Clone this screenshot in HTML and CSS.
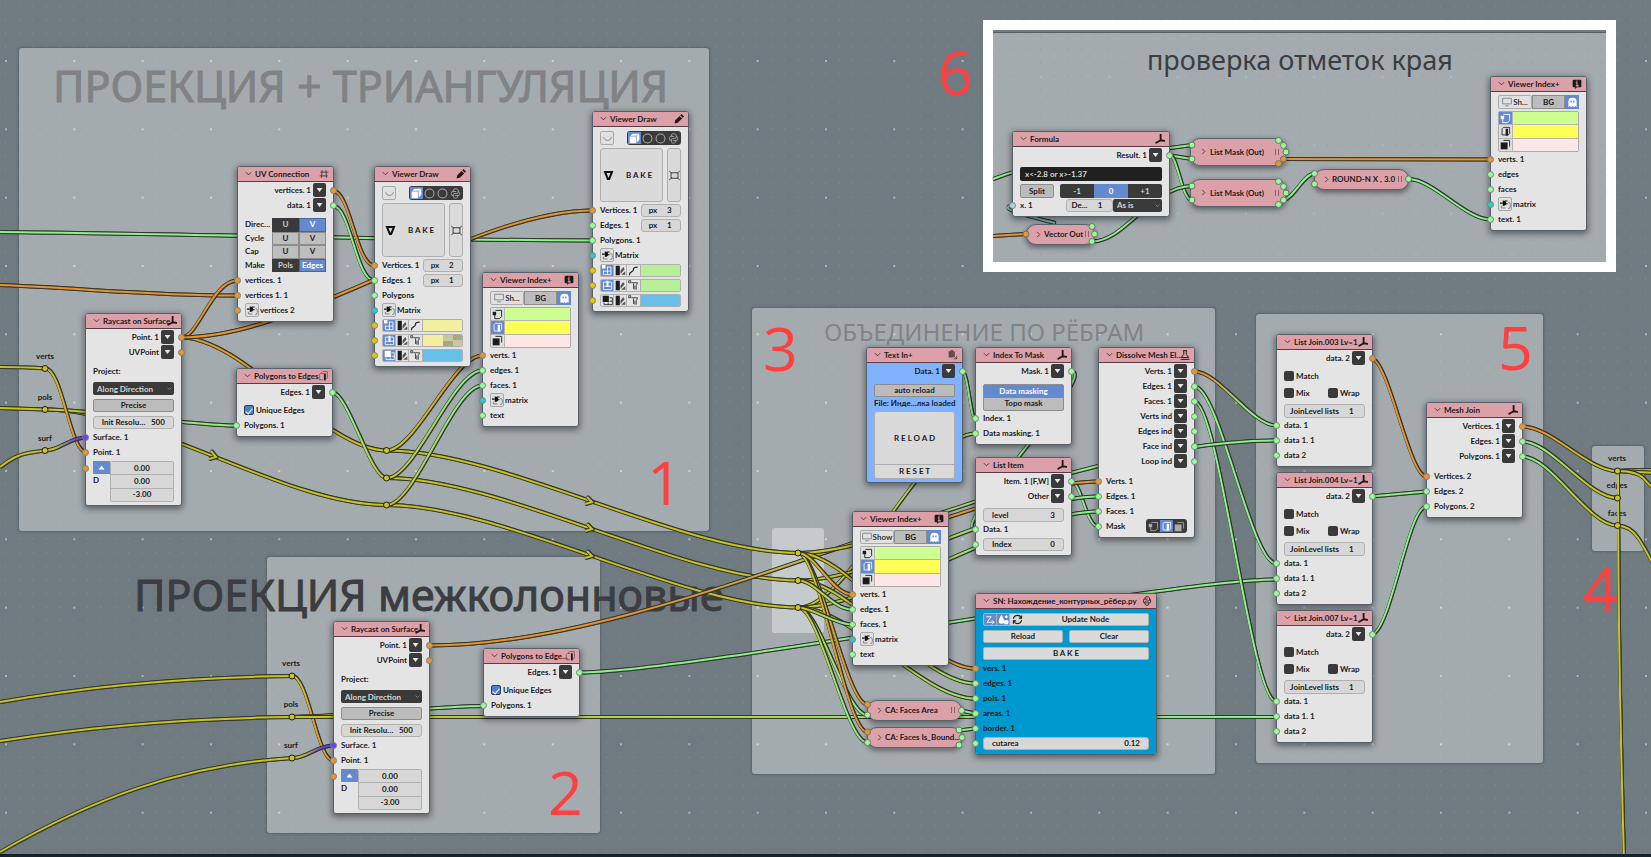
FILE: index.html
```html
<!DOCTYPE html>
<html lang="ru">
<head>
<meta charset="utf-8">
<title>Node editor</title>
<link rel="stylesheet" href="styles.css">
</head>
<body>
<svg class="defs" aria-hidden="true">
  <defs>
    <symbol id="chev" viewBox="0 0 16 16"><path d="M2 5l6 6 6-6" fill="none" stroke="currentColor" stroke-width="2"/></symbol>
    <symbol id="axis" viewBox="0 0 16 16"><path d="M9 1v9L2 14M9 10l6 1" fill="none" stroke="currentColor" stroke-width="3" stroke-linecap="round"/></symbol>
    <symbol id="hash" viewBox="0 0 16 16"><path d="M2 5h13M1 11h13M5 2L4 14M11 2l1 12" fill="none" stroke="#4a3a3e" stroke-width="1.500"/></symbol>
    <symbol id="pencil" viewBox="0 0 16 16"><path d="M1 15l1-5 7-7 4 4-7 7zM10 2l2-2 4 4-2 2z" fill="currentColor"/></symbol>
    <symbol id="info" viewBox="0 0 16 16"><path d="M3 1h10q2 0 2 2v8q0 2-2 2H8l-3 3v-3H3q-2 0-2-2V3q0-2 2-2z" fill="currentColor"/><path d="M8 2.500v2M6 6h2v5M6 11h5" fill="none" stroke="#dca1a8" stroke-width="1.700"/></symbol>
    <symbol id="bar" viewBox="0 0 16 16"><path d="M5 3l2-2h8v10l-2 2M8 14H2V6l2-2h5" fill="none" stroke="#6a4a50" stroke-width="1.200"/><path d="M11 4v11" stroke="currentColor" stroke-width="3"/></symbol>
    <symbol id="flask" viewBox="0 0 16 16"><path d="M5 1h6M6 1v6l-4 5h12l-4-5V1M1 15h14" fill="none" stroke="currentColor" stroke-width="1.500"/></symbol>
    <symbol id="paste" viewBox="0 0 16 16"><path d="M1 2h3V0h4v2h3v7L8 12H1z" fill="currentColor"/><path d="M9 9l5 5m0-5v5h-5" fill="none" stroke="currentColor" stroke-width="1.500"/></symbol>
    <symbol id="snake" viewBox="0 0 16 16"><path d="M9 5H3q-2 3 0 6h2V9q0-1 2-1h3q2 0 2-2V3q-1-2-4-2T5 3v2M7 11h6q2-3 0-6h-1M11 11v2q-1 2-3 2t-3-2v-2" fill="none" stroke="currentColor" stroke-width="1.300"/></symbol>
    <symbol id="screen" viewBox="0 0 16 16"><path d="M1 2h14v9H1zM5 14h6" fill="none" stroke="currentColor" stroke-width="1.500"/></symbol>
    <symbol id="ghost" viewBox="0 0 16 16"><path d="M2 15V6q0-5 6-5t6 5v9l-2-2-2 2-2-2-2 2-2-2z" fill="#fff"/><path d="M6 5v3M10 5v3" stroke="#5680c2" stroke-width="1.800"/></symbol>
    <symbol id="cube" viewBox="0 0 16 16"><path d="M1 5h9v10H1zM2 4l3-3h10l-4 3zM11 5l4-4v9l-4 4z" fill="#fff"/></symbol>
    <symbol id="ring" viewBox="0 0 16 16"><circle cx="8" cy="8" r="6.500" fill="none" stroke="currentColor" stroke-width="1.500"/></symbol>
    <symbol id="plug" viewBox="0 0 16 16"><path d="M0 6h4M7 3h4M7 7h4" stroke="#111" stroke-width="1.500"/><path d="M4 2q5 0 5 4t-5 4z" fill="#111"/><path d="M2 10v3h6M12 5q3 0 3 3v3q0 3-3 3" fill="none" stroke="#777" stroke-width="1.300"/></symbol>
    <symbol id="smile" viewBox="0 0 16 16"><path d="M2 6q2 5 6 5t6-5" fill="none" stroke="currentColor" stroke-width="1.400"/></symbol>
    <symbol id="tri" viewBox="0 0 16 16"><path d="M3 3h10L9 13H7z" fill="none" stroke="#111" stroke-width="3"/></symbol>
    <symbol id="target" viewBox="0 0 16 16"><path d="M3 4h10v8H3zM0 1l4 4M16 1l-4 4M0 15l4-4M16 15l-4-4" fill="none" stroke="#333" stroke-width="1.300"/></symbol>
    <symbol id="mv" viewBox="0 0 16 16"><path d="M5 2h9v9l-3 3H4V8" fill="none" stroke="currentColor" stroke-width="1.300"/><path d="M1 4h5v5H1z" fill="currentColor"/></symbol>
    <symbol id="me" viewBox="0 0 16 16"><path d="M3 13V4l2-2h9v9l-2 2H3" fill="none" stroke="currentColor" stroke-width="1.200"/><path d="M10 4v10" stroke="currentColor" stroke-width="3.500"/></symbol>
    <symbol id="mf" viewBox="0 0 16 16"><path d="M5 2h9v9" fill="none" stroke="currentColor" stroke-width="1.300"/><path d="M1 5h10v10H1z" fill="currentColor"/></symbol>
    <symbol id="gv" viewBox="0 0 16 16"><path d="M2 8v6h11V3H7M8 3v11M2 9h11" fill="none" stroke="currentColor" stroke-width="1.200"/><path d="M0 0h5v5H0z" fill="currentColor"/></symbol>
    <symbol id="ge" viewBox="0 0 16 16"><path d="M2 3h12v11H2zM2 9h12" fill="none" stroke="currentColor" stroke-width="1.200"/><path d="M8 1v9" stroke="currentColor" stroke-width="3"/></symbol>
    <symbol id="gf" viewBox="0 0 16 16"><path d="M11 4h4v10H3v-3M9 11v3M11 9h4" fill="none" stroke="currentColor" stroke-width="1.200"/><path d="M1 1h9v9H1z" fill="currentColor"/></symbol>
    <symbol id="pal" viewBox="0 0 16 16"><path d="M1 1h6v14H1z" fill="#1c1c1c"/><path d="M8 8l4-5 2 3-6 7zM9 14h6v-5z" fill="#555"/></symbol>
    <symbol id="curve" viewBox="0 0 16 16"><path d="M2 15q0-4 3-5t3-4 6-3" fill="none" stroke="#222" stroke-width="1.800"/></symbol>
    <symbol id="brush" viewBox="0 0 16 16"><path d="M1 1h3v3H1zM5 4h9l-2 4v6M8 5v8M10 8v6" fill="none" stroke="#444" stroke-width="1.400"/></symbol>
    <symbol id="flow" viewBox="0 0 16 16"><path d="M2 4h7l-6 8h10M10 9l3 3-3 3" fill="none" stroke="currentColor" stroke-width="1.300"/></symbol>
    <symbol id="drop" viewBox="0 0 16 16"><path d="M5 1q8 13 0 13T5 1zM9 9h6v6H9z" fill="currentColor"/><circle cx="12" cy="4" r="2" fill="currentColor"/></symbol>
    <symbol id="cycle" viewBox="0 0 16 16"><path d="M2 7q1-5 6-5 4 0 5 3M14 2v4h-4M14 9q-1 5-6 5-4 0-5-3M2 14v-4h4" fill="none" stroke="currentColor" stroke-width="1.500"/></symbol>
    <g id="dots">
      <path d="M0 0h1v1h-1zM13.670 0h1v1h-1zM27.330 0h1v1h-1zM41 0h1v1h-1zM54.670 0h1v1h-1z"/>
    </g>
    <pattern id="grid" x="5" y="60" width="68.333" height="68.333" patternUnits="userSpaceOnUse">
      <g fill="#8a959c"><use href="#dots"/><use href="#dots" y="13.670"/><use href="#dots" y="27.330"/><use href="#dots" y="41"/><use href="#dots" y="54.670"/></g>
      <path d="M0 0h2v2h-2z" fill="#a6bac9"/>
    </pattern>
    <pattern id="grid-inset" x="47" y="46" width="68.333" height="68.333" patternUnits="userSpaceOnUse">
      <g fill="#8a959c"><use href="#dots"/><use href="#dots" y="13.670"/><use href="#dots" y="27.330"/><use href="#dots" y="41"/><use href="#dots" y="54.670"/></g>
      <path d="M0 0h2v2h-2z" fill="#a6bac9"/>
    </pattern>
    <linearGradient id="yo1" gradientUnits="userSpaceOnUse" x1="400" x2="470"><stop stop-color="#c8c41e"/><stop offset="1" stop-color="#e6942b"/></linearGradient>
    <linearGradient id="yg1" gradientUnits="userSpaceOnUse" x1="390" x2="460"><stop stop-color="#c8c41e"/><stop offset="1" stop-color="#8cf08c"/></linearGradient>
    <linearGradient id="oy1" gradientUnits="userSpaceOnUse" x1="181" x2="386"><stop stop-color="#e6942b"/><stop offset="1" stop-color="#c8c41e"/></linearGradient>
    <linearGradient id="gy1" gradientUnits="userSpaceOnUse" x1="350" x2="386"><stop stop-color="#8cf08c"/><stop offset="1" stop-color="#c8c41e"/></linearGradient>
    <linearGradient id="yo0" gradientUnits="userSpaceOnUse" x1="50" x2="76"><stop stop-color="#c8c41e"/><stop offset="1" stop-color="#e6942b"/></linearGradient>
    <linearGradient id="yg0" gradientUnits="userSpaceOnUse" x1="45" x2="236"><stop stop-color="#c8c41e"/><stop offset="1" stop-color="#8cf08c"/></linearGradient>
    <linearGradient id="yp0" gradientUnits="userSpaceOnUse" x1="54" x2="76"><stop stop-color="#c8c41e"/><stop offset="1" stop-color="#6a3cf0"/></linearGradient>
    <linearGradient id="yo2" gradientUnits="userSpaceOnUse" x1="297" x2="323"><stop stop-color="#c8c41e"/><stop offset="1" stop-color="#e6942b"/></linearGradient>
    <linearGradient id="yp2" gradientUnits="userSpaceOnUse" x1="301" x2="323"><stop stop-color="#c8c41e"/><stop offset="1" stop-color="#6a3cf0"/></linearGradient>
    <linearGradient id="yg2s" gradientUnits="userSpaceOnUse" x1="330" x2="450"><stop stop-color="#c8c41e"/><stop offset="1" stop-color="#8cf08c"/></linearGradient>
    <linearGradient id="yg2" gradientUnits="userSpaceOnUse" x1="292" x2="1276"><stop stop-color="#c8c41e"/><stop offset="1" stop-color="#7cf58c"/></linearGradient>
    <linearGradient id="og2" gradientUnits="userSpaceOnUse" x1="650" x2="1050"><stop stop-color="#e6942b"/><stop offset="1" stop-color="#8cf08c"/></linearGradient>
    <linearGradient id="yo3" gradientUnits="userSpaceOnUse" x1="805" x2="845"><stop stop-color="#c8c41e"/><stop offset="1" stop-color="#e6942b"/></linearGradient>
    <linearGradient id="yg3" gradientUnits="userSpaceOnUse" x1="805" x2="845"><stop stop-color="#c8c41e"/><stop offset="1" stop-color="#8cf08c"/></linearGradient>
    <linearGradient id="yo4" gradientUnits="userSpaceOnUse" x1="820" x2="975"><stop stop-color="#c8c41e"/><stop offset="1" stop-color="#e6942b"/></linearGradient>
    <linearGradient id="yg4" gradientUnits="userSpaceOnUse" x1="820" x2="1040"><stop stop-color="#c8c41e"/><stop offset="1" stop-color="#8cf08c"/></linearGradient>
    <linearGradient id="og5" gradientUnits="userSpaceOnUse" x1="1205" x2="1250"><stop stop-color="#e6942b"/><stop offset="1" stop-color="#8cf08c"/></linearGradient>
    <linearGradient id="oy5" gradientUnits="userSpaceOnUse" x1="1535" x2="1590"><stop stop-color="#e6942b"/><stop offset="1" stop-color="#c8c41e"/></linearGradient>
    <linearGradient id="gy5" gradientUnits="userSpaceOnUse" x1="1535" x2="1590"><stop stop-color="#8cf08c"/><stop offset="1" stop-color="#c8c41e"/></linearGradient>
  </defs>
</svg>

<main class="canvas">
  <svg class="layer"><rect width="100%" height="100%" fill="url(#grid)"/></svg>

  <section class="frame f1"></section>
  <section class="frame f2"></section>
  <section class="frame f3"></section>
  <section class="frame f3a"></section>
  <section class="frame f4"></section>
  <section class="frame f5"></section>
  <section class="inset"><svg class="layer"><rect width="100%" height="100%" fill="url(#grid-inset)"/></svg><div class="inset-frame"></div></section>

  <h2 class="title t1">ПРОЕКЦИЯ + ТРИАНГУЛЯЦИЯ</h2>
  <h2 class="title t2">ПРОЕКЦИЯ межколонновые</h2>
  <h2 class="title t3">ОБЪЕДИНЕНИЕ ПО РЁБРАМ</h2>
  <h2 class="title t6">проверка отметок края</h2>
  <span class="tag l1">verts</span><span class="tag l2">pols</span><span class="tag l3">surf</span>
  <span class="tag l4">verts</span><span class="tag l5">pols</span><span class="tag l6">surf</span>
  <span class="tag l7">verts</span><span class="tag l8">edges</span><span class="tag l9">faces</span>

  <svg class="layer wires">
    <g stroke="#c8c41e">
      <path d="M0 367Q25 367 45 368.500"/><path d="M0 408L45 409.500"/><path d="M0 467Q15 455 28 453T45 450.500"/>
      <path d="M45 409.500C147 409.500 284 505 386.500 505"/>
      <path d="M386.500 450.500C502 450.500 683 553 798 553"/><path d="M386.500 478C502 478 683 580.500 798 580.500"/><path d="M386.500 505C502 505 683 607.500 798 607.500"/>
      <path d="M0 702C100 684 200 677 292 676"/><path d="M0 741C100 725 200 718 292 717"/><path d="M0 852C90 800 180 765 292 758"/>
      <path d="M211 451L216 457L209 459"/><path d="M587 497L592 502L585 504"/><path d="M587 524L592 529L585 531"/><path d="M587 551L592 556L585 558"/>
      <path d="M1617 471Q1636 470 1660 470"/><path d="M1617 471L1660 473"/><path d="M1617 471Q1638 471 1645 480T1660 490"/>
      <path d="M1617 525.500Q1630 526 1638 538T1656 570"/>
      <path d="M1618 471Q1618 660 1624 860"/>
    </g>
    <path d="M45 409.500C90 409.500 190 425.500 236 425.500" stroke="url(#yg0)"/>
    <path d="M45 368.500C62 368.500 70 452.500 86 452.500" stroke="url(#yo0)"/>
    <path d="M45 450.500C60 450.500 68 437.500 86 437.500" stroke="url(#yp0)"/>
    <path d="M292 676C308 676 317 760.500 333 760.500" stroke="url(#yo2)"/>
    <path d="M292 758C307 758 316 745.500 333 745.500" stroke="url(#yp2)"/>
    <path d="M292 717C330 717 440 706 484 706" stroke="url(#yg2s)"/>
    <path d="M292 717L1276 717" stroke="url(#yg2)"/>
    <g stroke="#8cf08c">
      <path d="M0 232C200 234 400 240 593 240.500"/>
      <path d="M333 206C350 206 356 280.500 374 280.500"/>
      <path d="M579 672.500C684 672.500 1171 579.500 1276 579.500"/>
      <path d="M1071 371.500C1100 371.500 947 529.500 975 529.500"/>
      <path d="M962 371.500C968 371.500 970 418.500 975 418.500"/>
      <path d="M1071 481.500C1081 481.500 1086 526.500 1098 526.500"/>
      <path d="M961 710.500L975 713.500"/><path d="M959 730.500L975 728.500"/>
      <path d="M1194 386.500C1219 386.500 1251 563.500 1276 563.500"/>
      <path d="M1194 401.500C1219 401.500 1251 701.500 1276 701.500"/>
      <path d="M1371 496.500L1426 491.500"/><path d="M1371 634.500C1390 634.500 1408 506.500 1426 506.500"/>
      <path d="M993 179Q1010 172 1030 168T1192 145"/>
      <path d="M1170 155.500L1192 159"/><path d="M1170 155.500C1177 155.500 1182 200.500 1192 200.500"/>
      <path d="M1092 241.500C1125 241.500 1150 187 1192 186"/>
      <path d="M1283 200C1292 200 1304 173.500 1314 173.500"/>
      <path d="M1408 179C1433 179 1465 219.500 1490 219.500"/>
    </g>
    <path d="M386.500 478C415 478 453 370.500 482 370.500" stroke="url(#yg1)"/>
    <path d="M386.500 505C415 505 453 385.500 482 385.500" stroke="url(#yg1)"/>
    <path d="M386.500 450.500C415 450.500 453 355.500 482 355.500" stroke="url(#yo1)"/>
    <path d="M181 337.500C243 337.500 325 450.500 386.500 450.500" stroke="url(#oy1)"/>
    <path d="M332 392.500C348 392.500 370 478 386.500 478" stroke="url(#gy1)"/>
    <path d="M429 645.500C682 645.500 1023 440.500 1276 440.500" stroke="url(#og2)"/>
    <path d="M798 607.500C851 607.500 922 433.500 975 433.500" stroke="url(#yg4)"/>
    <path d="M798 553C878 553 1018 481.500 1098 481.500" stroke="url(#yo4)"/>
    <path d="M798 580.500C878 580.500 1018 496.500 1098 496.500" stroke="url(#yg4)"/>
    <path d="M798 607.500C878 607.500 1018 511.500 1098 511.500" stroke="url(#yg4)"/>
    <path d="M798 580.500C851 580.500 922 683.500 975 683.500" stroke="url(#yg4)"/>
    <path d="M798 607.500C851 607.500 922 698.500 975 698.500" stroke="url(#yg4)"/>
    <path d="M798 553C851 553 922 668.500 975 668.500" stroke="url(#yo4)"/>
    <path d="M798 607.500C819 607.500 846 715 867 715" stroke="url(#yg3)"/>
    <path d="M798 607.500C819 607.500 846 742.500 867 742.500" stroke="url(#yg3)"/>
    <path d="M798 553C819 553 846 704.500 867 704.500" stroke="url(#yo3)"/>
    <path d="M798 553C819 553 846 732 867 732" stroke="url(#yo3)"/>
    <path d="M798 580.500C815 580.500 832 609.500 852 609.500" stroke="url(#yg3)"/>
    <path d="M798 607.500C812 607.500 835 624.500 852 624.500" stroke="url(#yg3)"/>
    <path d="M798 553C815 553 832 594.500 852 594.500" stroke="url(#yo3)"/>
    <g stroke="#e6942b">
      <path d="M0 285C80 288 150 295.500 237 295.500"/>
      <path d="M181 337.500C198 337.500 212 280.500 237 280.500"/>
      <path d="M181 337.500C304 337.500 470 210.500 593 210.500"/>
      <path d="M333 191C350 191 356 265.500 374 265.500"/>
      <path d="M1371 358.500C1388 358.500 1409 476.500 1426 476.500"/>
      <path d="M993 236L1026 234"/>
      <path d="M1283 159L1490 159.500"/>
    </g>
    <path d="M1194 371.500C1219 371.500 1251 425.500 1276 425.500" stroke="url(#og5)"/>
    <path d="M1522 426.500C1551 426.500 1588 471 1617 471" stroke="url(#oy5)"/>
    <path d="M1522 441.500C1551 441.500 1588 498 1617 498" stroke="url(#gy5)"/>
    <path d="M1522 456.500C1551 456.500 1588 525.500 1617 525.500" stroke="url(#gy5)"/>
    <path d="M1012 205.500C1000 208 1012 212 1055 223" stroke="#7fb5b0"/>
  </svg>

  <article class="node n-uv">
    <header><svg class="ch"><use href="#chev"/></svg><h3>UV Connection</h3><svg class="ic"><use href="#hash"/></svg></header>
    <div class="body">
      <div class="out">vertices. 1<button class="dd" aria-label="menu"></button><i class="s o r"></i></div>
      <div class="out">data. 1<button class="dd" aria-label="menu"></button><i class="s g r"></i></div>
      <div class="uv m5">
        <span>Direc…</span><button class="dk">U</button><button class="bl">V</button>
        <span>Cycle</span><button>U</button><button>V</button>
        <span>Cap</span><button>U</button><button>V</button>
        <span>Make</span><button class="dk">Pols</button><button class="bl">Edges</button>
      </div>
      <div class="in m1"><i class="s o"></i>vertices. 1</div>
      <div class="in"><i class="s o"></i>vertices 1. 1</div>
      <div class="in"><i class="s o"></i><button class="sq" aria-label="plug"><svg><use href="#plug"/></svg></button>vertices 2</div>
    </div>
  </article>

  <article class="node n-vda">
    <header><svg class="ch"><use href="#chev"/></svg><h3>Viewer Draw</h3><svg class="ic"><use href="#pencil"/></svg></header>
    <div class="body">
      <div class="tools m3"><button class="sq" aria-label="show"><svg><use href="#smile"/></svg></button><div class="seg"><button class="bl" aria-label="solid"><svg><use href="#cube"/></svg></button><button aria-label="ring"><svg><use href="#ring"/></svg></button><button aria-label="ring"><svg><use href="#ring"/></svg></button><button aria-label="script"><svg><use href="#snake"/></svg></button></div></div>
      <div class="bake m3"><button class="b1"><svg><use href="#tri"/></svg>B A K E</button><button class="b2" aria-label="target"><svg><use href="#target"/></svg></button></div>
      <div class="in m1"><i class="s o"></i>Vertices. 1<label class="num px">px<input value="2"></label></div>
      <div class="in"><i class="s g"></i>Edges. 1<label class="num px">px<input value="1"></label></div>
      <div class="in"><i class="s g"></i>Polygons</div>
      <div class="in"><i class="s c"></i><button class="sq" aria-label="plug"><svg><use href="#plug"/></svg></button>Matrix</div>
      <div class="in"><i class="s y"></i><div class="col"><button class="bl" aria-label="v"><svg><use href="#gv"/></svg></button><button aria-label="p"><svg><use href="#pal"/></svg></button><button aria-label="c"><svg><use href="#curve"/></svg></button><button class="sw ylw" aria-label="color"></button></div></div>
      <div class="in"><i class="s y"></i><div class="col"><button class="bl" aria-label="e"><svg><use href="#ge"/></svg></button><button aria-label="p"><svg><use href="#pal"/></svg></button><button aria-label="c"><svg><use href="#brush"/></svg></button><button class="sw chk" aria-label="color"></button></div></div>
      <div class="in"><i class="s y"></i><div class="col"><button class="bl" aria-label="f"><svg><use href="#gf"/></svg></button><button aria-label="p"><svg><use href="#pal"/></svg></button><button aria-label="c"><svg><use href="#brush"/></svg></button><button class="sw sky" aria-label="color"></button></div></div>
    </div>
  </article>

  <article class="node n-vdb">
    <header><svg class="ch"><use href="#chev"/></svg><h3>Viewer Draw</h3><svg class="ic"><use href="#pencil"/></svg></header>
    <div class="body">
      <div class="tools m3"><button class="sq" aria-label="show"><svg><use href="#smile"/></svg></button><div class="seg"><button class="bl" aria-label="solid"><svg><use href="#cube"/></svg></button><button aria-label="ring"><svg><use href="#ring"/></svg></button><button aria-label="ring"><svg><use href="#ring"/></svg></button><button aria-label="script"><svg><use href="#snake"/></svg></button></div></div>
      <div class="bake m3"><button class="b1"><svg><use href="#tri"/></svg>B A K E</button><button class="b2" aria-label="target"><svg><use href="#target"/></svg></button></div>
      <div class="in m1"><i class="s o"></i>Vertices. 1<label class="num px">px<input value="3"></label></div>
      <div class="in"><i class="s g"></i>Edges. 1<label class="num px">px<input value="1"></label></div>
      <div class="in"><i class="s g"></i>Polygons. 1</div>
      <div class="in"><i class="s c"></i><button class="sq" aria-label="plug"><svg><use href="#plug"/></svg></button>Matrix</div>
      <div class="in"><i class="s y"></i><div class="col"><button class="bl" aria-label="v"><svg><use href="#gv"/></svg></button><button aria-label="p"><svg><use href="#pal"/></svg></button><button aria-label="c"><svg><use href="#curve"/></svg></button><button class="sw lime" aria-label="color"></button></div></div>
      <div class="in"><i class="s y"></i><div class="col"><button class="bl" aria-label="e"><svg><use href="#ge"/></svg></button><button aria-label="p"><svg><use href="#pal"/></svg></button><button aria-label="c"><svg><use href="#brush"/></svg></button><button class="sw lime" aria-label="color"></button></div></div>
      <div class="in"><i class="s y"></i><div class="col"><button aria-label="f"><svg><use href="#gf"/></svg></button><button aria-label="p"><svg><use href="#pal"/></svg></button><button aria-label="c"><svg><use href="#brush"/></svg></button><button class="sw sky" aria-label="color"></button></div></div>
    </div>
  </article>

  <article class="node n-via">
    <header><svg class="ch"><use href="#chev"/></svg><h3>Viewer Index+</h3><svg class="ic"><use href="#info"/></svg></header>
    <div class="body">
      <div class="show m2"><button class="sh"><svg><use href="#screen"/></svg>Sh...</button><button class="bg">BG</button><button class="bl gh" aria-label="ghost"><svg><use href="#ghost"/></svg></button></div>
      <div class="pal m2"><button aria-label="v"><svg><use href="#mv"/></svg></button><button class="c1" aria-label="color"></button><button class="bl" aria-label="e"><svg><use href="#me"/></svg></button><button class="c2" aria-label="color"></button><button aria-label="f"><svg><use href="#mf"/></svg></button><button class="c3" aria-label="color"></button></div>
      <div class="in"><i class="s o"></i>verts. 1</div>
      <div class="in"><i class="s g"></i>edges. 1</div>
      <div class="in"><i class="s g"></i>faces. 1</div>
      <div class="in"><i class="s c"></i><button class="sq" aria-label="plug"><svg><use href="#plug"/></svg></button>matrix</div>
      <div class="in"><i class="s g"></i>text</div>
    </div>
  </article>

  <article class="node n-vib">
    <header><svg class="ch"><use href="#chev"/></svg><h3>Viewer Index+</h3><svg class="ic"><use href="#info"/></svg></header>
    <div class="body">
      <div class="show m2"><button class="sh"><svg><use href="#screen"/></svg>Show</button><button class="bg">BG</button><button class="bl gh" aria-label="ghost"><svg><use href="#ghost"/></svg></button></div>
      <div class="pal m2"><button aria-label="v"><svg><use href="#mv"/></svg></button><button class="c1" aria-label="color"></button><button class="bl" aria-label="e"><svg><use href="#me"/></svg></button><button class="c2" aria-label="color"></button><button aria-label="f"><svg><use href="#mf"/></svg></button><button class="c3" aria-label="color"></button></div>
      <div class="in"><i class="s o"></i>verts. 1</div>
      <div class="in"><i class="s g"></i>edges. 1</div>
      <div class="in"><i class="s g"></i>faces. 1</div>
      <div class="in"><i class="s c"></i><button class="sq" aria-label="plug"><svg><use href="#plug"/></svg></button>matrix</div>
      <div class="in"><i class="s g"></i>text</div>
    </div>
  </article>

  <article class="node n-vic">
    <header><svg class="ch"><use href="#chev"/></svg><h3>Viewer Index+</h3><svg class="ic"><use href="#info"/></svg></header>
    <div class="body">
      <div class="show m2"><button class="sh"><svg><use href="#screen"/></svg>Sh...</button><button class="bg">BG</button><button class="bl gh" aria-label="ghost"><svg><use href="#ghost"/></svg></button></div>
      <div class="pal m2"><button class="bl" aria-label="v"><svg><use href="#mv"/></svg></button><button class="c1" aria-label="color"></button><button aria-label="e"><svg><use href="#me"/></svg></button><button class="c2" aria-label="color"></button><button aria-label="f"><svg><use href="#mf"/></svg></button><button class="c3" aria-label="color"></button></div>
      <div class="in"><i class="s o"></i>verts. 1</div>
      <div class="in"><i class="s g"></i>edges</div>
      <div class="in"><i class="s g"></i>faces</div>
      <div class="in"><i class="s c"></i><button class="sq" aria-label="plug"><svg><use href="#plug"/></svg></button>matrix</div>
      <div class="in"><i class="s g"></i>text. 1</div>
    </div>
  </article>

  <article class="node n-rca">
    <header><svg class="ch"><use href="#chev"/></svg><h3>Raycast on Surface</h3><svg class="ic"><use href="#axis"/></svg></header>
    <div class="body">
      <div class="out">Point. 1<button class="dd" aria-label="menu"></button><i class="s o r"></i></div>
      <div class="out">UVPoint<button class="dd" aria-label="menu"></button><i class="s o r"></i></div>
      <div class="in m4">Project:</div>
      <div class="drop m3"><select aria-label="Project"><option>Along Direction</option></select><svg><use href="#chev"/></svg></div>
      <button class="btn mid m4">Precise</button>
      <label class="num m4">Init Resolu…<input value="500"></label>
      <div class="in m1"><i class="s p"></i>Surface. 1</div>
      <div class="in"><i class="s o"></i>Point. 1</div>
      <div class="vec m1"><i class="s o"></i><div><button class="up" aria-label="up"></button><span>D</span></div><div class="xyz"><input aria-label="X" value="0.00"><input aria-label="Y" value="0.00"><input aria-label="Z" value="-3.00"></div></div>
    </div>
  </article>

  <article class="node n-rcb">
    <header><svg class="ch"><use href="#chev"/></svg><h3>Raycast on Surface</h3><svg class="ic"><use href="#axis"/></svg></header>
    <div class="body">
      <div class="out">Point. 1<button class="dd" aria-label="menu"></button><i class="s o r"></i></div>
      <div class="out">UVPoint<button class="dd" aria-label="menu"></button><i class="s o r"></i></div>
      <div class="in m4">Project:</div>
      <div class="drop m3"><select aria-label="Project"><option>Along Direction</option></select><svg><use href="#chev"/></svg></div>
      <button class="btn mid m4">Precise</button>
      <label class="num m4">Init Resolu…<input value="500"></label>
      <div class="in m1"><i class="s p"></i>Surface. 1</div>
      <div class="in"><i class="s o"></i>Point. 1</div>
      <div class="vec m1"><i class="s o"></i><div><button class="up" aria-label="up"></button><span>D</span></div><div class="xyz"><input aria-label="X" value="0.00"><input aria-label="Y" value="0.00"><input aria-label="Z" value="-3.00"></div></div>
    </div>
  </article>

  <article class="node n-pea">
    <header><svg class="ch"><use href="#chev"/></svg><h3>Polygons to Edges</h3><svg class="ic"><use href="#bar"/></svg></header>
    <div class="body">
      <div class="out">Edges. 1<button class="dd" aria-label="menu"></button><i class="s g r"></i></div>
      <div class="in m3"><label class="check"><input type="checkbox" checked>Unique Edges</label></div>
      <div class="in"><i class="s g"></i>Polygons. 1</div>
    </div>
  </article>

  <article class="node n-peb">
    <header><svg class="ch"><use href="#chev"/></svg><h3>Polygons to Edge...</h3><svg class="ic"><use href="#bar"/></svg></header>
    <div class="body">
      <div class="out">Edges. 1<button class="dd" aria-label="menu"></button><i class="s g r"></i></div>
      <div class="in m3"><label class="check"><input type="checkbox" checked>Unique Edges</label></div>
      <div class="in"><i class="s g"></i>Polygons. 1</div>
    </div>
  </article>

  <article class="node n-txt">
    <header><svg class="ch"><use href="#chev"/></svg><h3>Text In+</h3><svg class="ic dim"><use href="#paste"/></svg></header>
    <div class="body">
      <div class="out">Data. 1<button class="dd" aria-label="menu"></button><i class="s g r"></i></div>
      <button class="btn mid m5">auto reload</button>
      <div class="file">File: Инде...лка loaded</div>
      <div class="stack"><button class="tall">R E L O A D</button><button>R E S E T</button></div>
    </div>
  </article>

  <article class="node n-itm">
    <header><svg class="ch"><use href="#chev"/></svg><h3>Index To Mask</h3><svg class="ic"><use href="#axis"/></svg></header>
    <div class="body">
      <div class="out">Mask. 1<button class="dd" aria-label="menu"></button><i class="s g r"></i></div>
      <div class="two m5"><button class="bl">Data masking</button><button>Topo mask</button></div>
      <div class="in"><i class="s g"></i>Index. 1</div>
      <div class="in"><i class="s g"></i>Data masking. 1</div>
    </div>
  </article>

  <article class="node n-li">
    <header><svg class="ch"><use href="#chev"/></svg><h3>List Item</h3><svg class="ic"><use href="#axis"/></svg></header>
    <div class="body">
      <div class="out">Item. 1 [F,W]<button class="dd" aria-label="menu"></button><i class="s g r"></i></div>
      <div class="out">Other<button class="dd" aria-label="menu"></button><i class="s g r"></i></div>
      <label class="num wide h14 m4">level<input value="3"></label>
      <div class="in"><i class="s g"></i>Data. 1</div>
      <div class="in"><i class="s g"></i><label class="num wide full">Index<input value="0"></label></div>
    </div>
  </article>

  <article class="node n-dis">
    <header><svg class="ch"><use href="#chev"/></svg><h3>Dissolve Mesh El...</h3><svg class="ic"><use href="#flask"/></svg></header>
    <div class="body">
      <div class="out">Verts. 1<button class="dd" aria-label="menu"></button><i class="s o r"></i></div>
      <div class="out">Edges. 1<button class="dd" aria-label="menu"></button><i class="s g r"></i></div>
      <div class="out">Faces. 1<button class="dd" aria-label="menu"></button><i class="s g r"></i></div>
      <div class="out">Verts ind<button class="dd" aria-label="menu"></button><i class="s g r"></i></div>
      <div class="out">Edges ind<button class="dd" aria-label="menu"></button><i class="s g r"></i></div>
      <div class="out">Face ind<button class="dd" aria-label="menu"></button><i class="s g r"></i></div>
      <div class="out">Loop ind<button class="dd" aria-label="menu"></button><i class="s g r"></i></div>
      <div class="in m5"><i class="s o"></i>Verts. 1</div>
      <div class="in"><i class="s g"></i>Edges. 1</div>
      <div class="in"><i class="s g"></i>Faces. 1</div>
      <div class="in"><i class="s g"></i>Mask<div class="seg end"><button aria-label="v"><svg><use href="#mv"/></svg></button><button class="bl" aria-label="e"><svg><use href="#me"/></svg></button><button aria-label="f"><svg><use href="#mf"/></svg></button></div></div>
    </div>
  </article>

  <article class="node n-sn">
    <header><svg class="ch"><use href="#chev"/></svg><h3>SN: Нахождение_контурных_рёбер.py</h3><svg class="ic"><use href="#snake"/></svg></header>
    <div class="body">
      <div class="upd m3"><button class="bl" aria-label="flow"><svg><use href="#flow"/></svg></button><button class="bl" aria-label="drop"><svg><use href="#drop"/></svg></button><button class="rest"><svg><use href="#cycle"/></svg><span>Update Node</span></button></div>
      <div class="pair m4"><button class="btn">Reload</button><button class="btn">Clear</button></div>
      <button class="btn m4">B A K E</button>
      <div class="in m1"><i class="s o"></i>vers. 1</div>
      <div class="in"><i class="s g"></i>edges. 1</div>
      <div class="in"><i class="s g"></i>pols. 1</div>
      <div class="in"><i class="s g"></i>areas. 1</div>
      <div class="in"><i class="s g"></i>border. 1</div>
      <div class="in"><i class="s g"></i><label class="num wide full">cutarea<input value="0.12"></label></div>
    </div>
  </article>

  <article class="node n-j3">
    <header><svg class="ch"><use href="#chev"/></svg><h3>List Join.003 Lv=1</h3><svg class="ic"><use href="#axis"/></svg></header>
    <div class="body">
      <div class="out">data. 2<button class="dd" aria-label="menu"></button><i class="s o r"></i></div>
      <div class="in m3"><label class="check"><input type="checkbox">Match</label></div>
      <div class="in halves m2"><label class="check"><input type="checkbox">Mix</label><label class="check"><input type="checkbox">Wrap</label></div>
      <label class="num h14 m3">JoinLevel lists<input value="1"></label>
      <div class="in"><i class="s g"></i>data. 1</div><div class="in"><i class="s g"></i>data 1. 1</div><div class="in"><i class="s g"></i>data 2</div>
    </div>
  </article>
  <article class="node n-j4">
    <header><svg class="ch"><use href="#chev"/></svg><h3>List Join.004 Lv=1</h3><svg class="ic"><use href="#axis"/></svg></header>
    <div class="body">
      <div class="out">data. 2<button class="dd" aria-label="menu"></button><i class="s g r"></i></div>
      <div class="in m3"><label class="check"><input type="checkbox">Match</label></div>
      <div class="in halves m2"><label class="check"><input type="checkbox">Mix</label><label class="check"><input type="checkbox">Wrap</label></div>
      <label class="num h14 m3">JoinLevel lists<input value="1"></label>
      <div class="in"><i class="s g"></i>data. 1</div><div class="in"><i class="s g"></i>data 1. 1</div><div class="in"><i class="s g"></i>data 2</div>
    </div>
  </article>
  <article class="node n-j7">
    <header><svg class="ch"><use href="#chev"/></svg><h3>List Join.007 Lv=1</h3><svg class="ic"><use href="#axis"/></svg></header>
    <div class="body">
      <div class="out">data. 2<button class="dd" aria-label="menu"></button><i class="s g r"></i></div>
      <div class="in m3"><label class="check"><input type="checkbox">Match</label></div>
      <div class="in halves m2"><label class="check"><input type="checkbox">Mix</label><label class="check"><input type="checkbox">Wrap</label></div>
      <label class="num h14 m3">JoinLevel lists<input value="1"></label>
      <div class="in"><i class="s g"></i>data. 1</div><div class="in"><i class="s g"></i>data 1. 1</div><div class="in"><i class="s g"></i>data 2</div>
    </div>
  </article>

  <article class="node n-mj">
    <header><svg class="ch"><use href="#chev"/></svg><h3>Mesh Join</h3><svg class="ic"><use href="#axis"/></svg></header>
    <div class="body">
      <div class="out">Vertices. 1<button class="dd" aria-label="menu"></button><i class="s o r"></i></div>
      <div class="out">Edges. 1<button class="dd" aria-label="menu"></button><i class="s g r"></i></div>
      <div class="out">Polygons. 1<button class="dd" aria-label="menu"></button><i class="s g r"></i></div>
      <div class="in m5"><i class="s o"></i>Vertices. 2</div>
      <div class="in"><i class="s g"></i>Edges. 2</div>
      <div class="in"><i class="s g"></i>Polygons. 2</div>
    </div>
  </article>

  <article class="node n-fm">
    <header><svg class="ch"><use href="#chev"/></svg><h3>Formula</h3><svg class="ic"><use href="#axis"/></svg></header>
    <div class="body">
      <div class="out">Result. 1<button class="dd" aria-label="menu"></button><i class="s g r"></i></div>
      <input class="formula m4" aria-label="Formula" value="x&lt;-2.8 or x&gt;-1.37">
      <div class="split m3"><button class="btn mid">Split</button><div class="tri3"><button>-1</button><button class="bl">0</button><button>+1</button></div></div>
      <div class="in"><i class="s w"></i>x. 1<div class="asis"><label class="num">De...<input value="1"></label><div class="drop"><select aria-label="Mode"><option>As is</option></select><svg><use href="#chev"/></svg></div></div></div>
    </div>
  </article>

  <div class="pill p-vo"><svg class="ch"><use href="#chev"/></svg><span>Vector Out</span><b></b></div>
  <div class="pill p-m1"><svg class="ch"><use href="#chev"/></svg><span>List Mask (Out)</span><b></b></div>
  <div class="pill p-m2"><svg class="ch"><use href="#chev"/></svg><span>List Mask (Out)</span><b></b></div>
  <div class="pill p-rn"><svg class="ch"><use href="#chev"/></svg><span>ROUND-N X , 3.0</span><b></b></div>
  <div class="pill p-fa"><svg class="ch"><use href="#chev"/></svg><span>CA: Faces Area</span><b></b></div>
  <div class="pill p-fb"><svg class="ch"><use href="#chev"/></svg><span>CA: Faces Is_Bound...</span></div>

  <svg class="layer pins">
    <g class="g">
      <circle cx="1092" cy="226.500" r="3"/><circle cx="1094.500" cy="234" r="3"/><circle cx="1092" cy="241.500" r="3"/>
      <circle cx="1192" cy="145" r="3"/><circle cx="1192" cy="159" r="3"/><circle cx="1278.500" cy="140.500" r="3"/><circle cx="1283.500" cy="145.500" r="3"/><circle cx="1286" cy="152" r="3"/>
      <circle cx="1192" cy="186" r="3"/><circle cx="1192" cy="200" r="3"/><circle cx="1278.500" cy="181.500" r="3"/><circle cx="1283.500" cy="186.500" r="3"/><circle cx="1286" cy="193" r="3"/><circle cx="1283.500" cy="200" r="3"/><circle cx="1278.500" cy="204.500" r="3"/>
      <circle cx="1314.500" cy="173.500" r="3"/><circle cx="1314.500" cy="184" r="3"/><circle cx="1408.500" cy="179" r="3"/>
      <circle cx="867.500" cy="715" r="3"/><circle cx="961.500" cy="710.500" r="3"/><circle cx="867.500" cy="742.500" r="3"/><circle cx="959" cy="730" r="3"/><circle cx="962" cy="737.500" r="3"/><circle cx="959" cy="745" r="3"/>
    </g>
    <g class="o">
      <circle cx="1026" cy="234" r="3"/><circle cx="1283.500" cy="159" r="3"/><circle cx="1278.500" cy="163.500" r="3"/><circle cx="867.500" cy="704.500" r="3"/><circle cx="867.500" cy="732" r="3"/>
    </g>
    <g class="y">
      <circle cx="45" cy="368.500" r="3"/><circle cx="45" cy="409.500" r="3"/><circle cx="45" cy="450.500" r="3"/>
      <circle cx="386.500" cy="450.500" r="3"/><circle cx="386.500" cy="478" r="3"/><circle cx="386.500" cy="505" r="3"/>
      <circle cx="292" cy="676" r="3"/><circle cx="292" cy="717" r="3"/><circle cx="292" cy="758" r="3"/>
      <circle cx="798" cy="553" r="3"/><circle cx="798" cy="580.500" r="3"/><circle cx="798" cy="607.500" r="3"/>
      <circle cx="1617.500" cy="471" r="3"/><circle cx="1617.500" cy="498" r="3"/><circle cx="1617.500" cy="525.500" r="3"/>
    </g>
  </svg>

  <span class="no d1">1</span><span class="no d2">2</span><span class="no d3">3</span><span class="no d4">4</span><span class="no d5">5</span><span class="no d6">6</span>
</main>
<footer class="edge"></footer>
</body>
</html>
```
FILE: styles.css
```css
* { box-sizing: border-box; }
html, body { height: 100%; }
body {
  margin: 0;
  display: flex;
  flex-direction: column;
  overflow: hidden;
  background: #6f7a81;
  color: #1a1a1a;
  font: 700 8px/10px Lato, "Noto Sans", sans-serif;
}
h2, h3 { margin: 0; font: inherit; }
button, input, select {
  margin: 0; padding: 0; border: 0; border-radius: 0;
  background: none; color: inherit; font: inherit; min-width: 0; outline: 0;
}
.defs { position: absolute; width: 0; height: 0; }
.canvas { position: relative; flex: 1; overflow: hidden; }
.edge { height: 3px; background: #14232b; }
.layer { position: absolute; inset: 0; width: 100%; height: 100%; }

/* frames */
.frame {
  position: absolute;
  background: rgba(255, 255, 255, .37);
  border-radius: 3px;
  box-shadow: 0 0 2px 1px rgba(40, 50, 56, .3);
}
.f1 { left: 19px; top: 48px; width: 690px; height: 483px; }
.f2 { left: 267px; top: 557px; width: 333px; height: 276px; }
.f3 { left: 752px; top: 308px; width: 463px; height: 466px; }
.f3a { left: 772px; top: 528px; width: 52px; height: 105px; box-shadow: none; }
.f4 { left: 1592px; top: 446px; width: 52px; height: 105px; }
.f5 { left: 1256px; top: 314px; width: 287px; height: 449px; }
.inset {
  position: absolute; left: 983px; top: 20px; width: 633px; height: 252px;
  border: 10px solid #fff; background: #6f7a81; padding-top: 2px;
}
.inset-frame { height: 100%; background: rgba(255, 255, 255, .37); border-top: 1px solid #555f66; }

.title { position: absolute; white-space: nowrap; font-family: "Noto Sans", sans-serif; font-weight: 400; }
.t1 { left: 53px; top: 60px; font-size: 43px; line-height: 52px; color: #808284; -webkit-text-stroke: 1px #808284; }
.t2 { left: 134px; top: 569px; font-size: 43px; line-height: 52px; color: #3b3d41; -webkit-text-stroke: 1px #3b3d41; }
.t3 { left: 824px; top: 317px; font-size: 24px; line-height: 30px; color: #808386; }
.t6 { left: 1147px; top: 42px; font-size: 27px; line-height: 36px; color: #3b3d41; }

.tag { position: absolute; width: 40px; text-align: center; }
.l1, .l2, .l3 { left: 25px; }
.l4, .l5, .l6 { left: 271px; }
.l7, .l8, .l9 { left: 1597px; }
.l1 { top: 351px; } .l2 { top: 392px; } .l3 { top: 433px; }
.l4 { top: 658px; } .l5 { top: 699px; } .l6 { top: 740px; }
.l7 { top: 453px; } .l8 { top: 480px; } .l9 { top: 508px; }

/* wires and pins */
.wires { fill: none; stroke-width: 2; }
.wires path { filter: drop-shadow(0 1px 0 #34362f) drop-shadow(0 -1px 0 #34362f) drop-shadow(1px 0 0 #34362f); }
.pins { stroke: #6d7470; stroke-width: 1; pointer-events: none; }
.pins .g { fill: #95ff95; }
.pins .o { fill: #e6982f; }
.pins .y { fill: #c8c42a; stroke: #1c1c14; }

/* nodes */
.node {
  position: absolute; width: 97px;
  border: 1px solid #55606a; border-radius: 3px;
  background: #e4e4e4;
  box-shadow: 0 2px 6px 1px rgba(0, 0, 0, .45);
}
.node header {
  display: flex; align-items: center; height: 15px; padding: 0 4px 1px 7px;
  background: #dca1a8; border-bottom: 1px solid #5a3c46; border-radius: 2px 2px 0 0;
  white-space: nowrap;
}
.node h3 { flex: 1; min-width: 0; margin-left: 3px; }
.ch { width: 7px; height: 7px; flex: none; color: #333; }
.ic { width: 10px; height: 10px; flex: none; }
.ic.dim { color: #6a4a50; }
.body { display: flex; flex-direction: column; padding: 1px 7px 3px; }
.m1 { margin-top: 1px; } .m2 { margin-top: 2px; } .m3 { margin-top: 3px; } .m4 { margin-top: 4px; } .m5 { margin-top: 5px; }
.in, .out { position: relative; display: flex; align-items: center; height: 15px; padding-bottom: 1px; white-space: nowrap; }
.out { justify-content: flex-end; gap: 2px; }
.s {
  position: absolute; left: -11px; top: 4px; width: 7px; height: 7px;
  border: 1px solid #7b7f7d; border-radius: 50%;
}
.s.r { left: auto; right: -11px; }
.s.o { background: #e6982f; } .s.g { background: #95ff95; } .s.c { background: #30c8c4; }
.s.y { background: #e2c800; } .s.p { background: #6f3cff; } .s.w { background: #a8d8e6; }
.dd { width: 13px; height: 14px; border-radius: 2px; background: #3a3a3a; display: grid; place-items: center; }
.dd::after { content: ""; width: 6px; height: 4px; background: #e8e8e8; clip-path: polygon(0 0, 100% 0, 50% 100%); }
.bl { background: #638ace; color: #fff; }
button svg { width: 11px; height: 11px; display: block; }
.sq {
  width: 14px; height: 14px; flex: none; display: grid; place-items: center; margin-right: 1px;
  border: 1px solid #a8a8a8; border-radius: 2px; background: #e0e0e0; color: #888;
}
.btn { height: 13px; border: 1px solid #b0b0b0; border-radius: 2px; background: #dadada; line-height: 9px; }
.btn.mid { background: #bcbcbc; border-color: #8d8d8d; }
.num {
  display: flex; align-items: center; justify-content: center; gap: 5px; height: 13px;
  border: 1px solid #b0b0b0; border-radius: 3px; background: #d7d7d7; line-height: 9px;
}
.num input { width: 15px; height: 9px; text-align: center; }
.h14 { height: 14px; }
.num.px { position: absolute; right: 0; width: 40px; gap: 8px; }
.num.px input { width: 8px; }
.num.wide { justify-content: space-between; padding: 0 8px; }
.num.wide input { width: 20px; text-align: right; }
.full { flex: 1; }
.drop { position: relative; display: grid; }
.drop select { appearance: none; height: 13px; padding-left: 4px; border-radius: 2px; background: #3a3a3a; color: #d4d4d4; }
.drop svg { position: absolute; right: 2px; top: 4px; width: 5px; height: 5px; color: #aaa; }

.uv { display: grid; grid-template-columns: 27px 27px 27px; height: 54px; grid-auto-rows: 1fr; align-items: center; line-height: 9px; }
.uv button { height: 100%; background: #bebebe; border: 1px solid #8d8d8d; }
.uv .dk { background: #3a3a3a; color: #ccc; border-color: #3a3a3a; }
.uv .bl { background: #638ace; color: #fff; border-color: #46679d; }

.tools, .bake, .show { display: flex; justify-content: space-between; }
.tools, .show { height: 14px; }
.seg { display: flex; height: 14px; padding: 1px; border-radius: 3px; background: #3a3a3a; color: #aaa; }
.seg button { width: 13px; height: 12px; display: grid; place-items: center; }
.seg .bl { color: #fff; }
.end { margin-left: auto; }
.bake { height: 54px; gap: 4px; }
.bake button, .stack { border: 1px solid #aeaeae; border-radius: 3px; background: #dadada; }
.b1 { flex: 1; display: flex; align-items: center; gap: 12px; padding-left: 2px; }
.b2 { width: 14px; display: grid; place-items: center; }
.col { flex: 1; display: grid; grid-template-columns: 13px 13px 14px 1fr; height: 13px; border: 1px solid #b0b0b0; border-radius: 2px; overflow: hidden; }
.col button { display: grid; place-items: center; border-right: 1px solid #b0b0b0; }
.col .bl { background: #638ace; }
.col .sw { border: 0; }
.col .lime { background: #b8f09a; } .col .sky { background: #68c0e8; } .col .ylw { background: #f2f0a0; }
.col .chk { background: conic-gradient(#a8a880 25%, #c8c8a0 0 50%, #a8a880 0 75%, #c8c8a0 0) right / 50% 100% no-repeat #f2f0a0; }

.show button { height: 14px; border: 1px solid #aaa; display: flex; align-items: center; justify-content: center; }
.show .sh { width: 34px; gap: 1px; border-radius: 2px; background: #e0e0e0; color: #333; }
.sh svg { color: #888; flex: none; width: 10px; height: 10px; }
.show .bg { width: 33px; background: #bcbcbc; border-color: #8d8d8d; }
.show .gh { width: 14px; border-color: #638ace; }
.pal { display: grid; grid-template-columns: 13px 1fr; grid-auto-rows: 1fr; height: 41px; border: 1px solid #aaa; border-radius: 2px; gap: 1px; background: #b4b4b4; }
.pal button { display: grid; place-items: center; background: #e0e0e0; }
.pal .bl { background: #638ace; }
.pal .c1 { background: #ccff90; } .pal .c2 { background: #ffff55; } .pal .c3 { background: #ffe6e6; }

.check { display: flex; align-items: center; gap: 2px; }
.check input { appearance: none; width: 10px; height: 10px; border-radius: 2px; background: #3a3a3a; display: grid; place-items: center; }
.check input:checked { background: #4f7fc8; border: 1px solid #2c3c5a; }
.check input:checked::after { content: ""; width: 3px; height: 6px; border: solid #fff; border-width: 0 1px 1px 0; rotate: 40deg; }
.halves { display: grid; grid-template-columns: 44px 1fr; }

.vec { position: relative; display: grid; grid-template-columns: 17px 1fr; height: 41px; }
.up { display: grid; place-items: center; width: 17px; height: 13px; background: #638ace; margin-bottom: 1px; }
.up::after { content: ""; width: 6px; height: 4px; background: #fff; clip-path: polygon(50% 0, 100% 100%, 0 100%); }
.xyz { display: grid; border: 1px solid #b0b0b0; border-radius: 2px; background: #b0b0b0; gap: 1px; }
.xyz input { background: #d7d7d7; text-align: center; width: 100%; padding-bottom: 1px; }

.n-txt { background: #80b2ff; }
.file { height: 14px; line-height: 12px; white-space: nowrap; text-align: center; }
.stack { display: grid; grid-template-rows: 53px 13px; line-height: 9px; }
.stack .tall { border-bottom: 1px solid #aeaeae; }
.two { display: grid; height: 27px; border: 1px solid #8d8d8d; border-radius: 2px; background: #bcbcbc; line-height: 9px; }
.n-sn .body { background: #0099cf; border-radius: 0 0 2px 2px; }
.upd { display: flex; height: 13px; border-radius: 2px; overflow: hidden; background: #dadada; border: 1px solid #b0b0b0; line-height: 9px; }
.upd > .bl { width: 13px; display: grid; place-items: center; border-right: 1px solid #b0b0b0; }
.rest { flex: 1; display: flex; align-items: center; padding-left: 2px; }
.rest span { flex: 1; }
.pair { display: grid; grid-template-columns: 1fr 1fr; gap: 6px; }

.formula { height: 14px; border-radius: 2px; background: #202020; color: #d4d4d4; padding: 0 5px 1px; }
.split { display: grid; grid-template-columns: 34px 1fr; gap: 6px; height: 14px; line-height: 9px; }
.split .btn { height: 14px; }
.tri3 { display: grid; grid-template-columns: 1fr 1fr 1fr; border-radius: 2px; overflow: hidden; background: #3a3a3a; color: #d4d4d4; }
.asis { display: grid; grid-template-columns: 47px 49px; margin-left: auto; }

.pill {
  position: absolute; display: flex; align-items: center; height: 21px; padding: 0 6px 1px 8px; gap: 2px;
  border: 1px solid #59636a; border-radius: 10px; background: #dca1a8; white-space: nowrap;
  box-shadow: 0 2px 5px 1px rgba(0, 0, 0, .4);
}
.pill .ch { rotate: -90deg; }
.pill b { flex: none; margin-left: auto; width: 4px; height: 6px; border: solid #8f6068; border-width: 0 1px; }

.n-uv { left: 237px; top: 166px; }
.n-vda { left: 374px; top: 166px; }
.n-vdb { left: 592px; top: 111px; }
.n-via { left: 482px; top: 272px; }
.n-vib { left: 852px; top: 511px; }
.n-vic { left: 1490px; top: 76px; }
.n-rca { left: 85px; top: 313px; }
.n-rcb { left: 333px; top: 621px; }
.n-pea { left: 236px; top: 368px; }
.n-peb { left: 483px; top: 648px; }
.n-txt { left: 866px; top: 347px; }
.n-itm { left: 975px; top: 347px; }
.n-li { left: 975px; top: 457px; }
.n-dis { left: 1098px; top: 347px; }
.n-sn { left: 975px; top: 593px; width: 182px; }
.n-j3 { left: 1276px; top: 334px; }
.n-j4 { left: 1276px; top: 472px; }
.n-j7 { left: 1276px; top: 610px; }
.n-mj { left: 1426px; top: 402px; }
.n-fm { left: 1012px; top: 131px; width: 158px; }
.p-vo { left: 1026px; top: 224px; width: 69px; }
.p-m1 { left: 1190px; top: 138px; width: 96px; height: 28px; padding-left: 9px; gap: 3px; }
.p-m2 { left: 1190px; top: 179px; width: 96px; height: 28px; padding-left: 9px; gap: 3px; }
.p-rn { left: 1314px; top: 169px; width: 95px; }
.p-fa { left: 867px; top: 700px; width: 95px; }
.p-fb { left: 867px; top: 727px; width: 95px; }

.no { position: absolute; font: 400 61px/60px "Open Sans", sans-serif; color: #ff4040; }
.d1 { left: 647px; top: 452px; }
.d2 { left: 548px; top: 762px; }
.d3 { left: 763px; top: 318px; }
.d4 { left: 1583px; top: 558px; }
.d5 { left: 1498px; top: 317px; }
.d6 { left: 938px; top: 42px; }
```
